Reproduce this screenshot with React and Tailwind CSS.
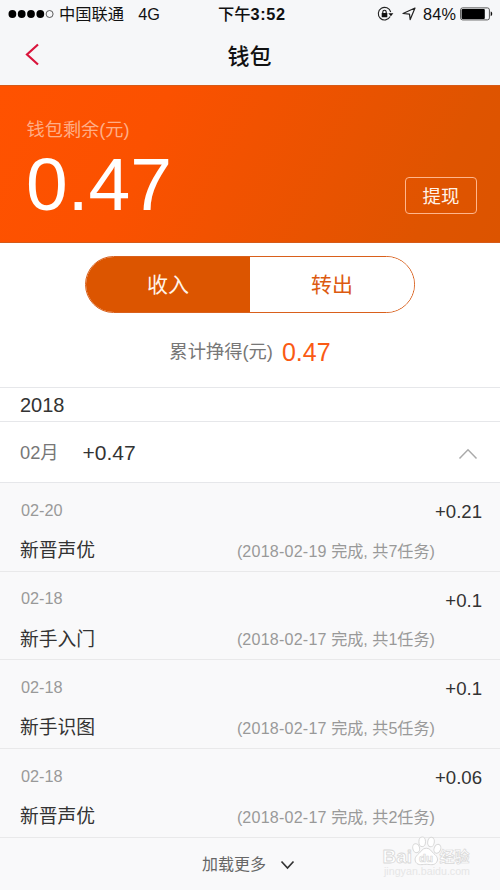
import React, { useState } from 'react';

const records = [
  { date: '02-20', title: '新晋声优', amount: '+0.21', day: '2018-02-19', count: 7 },
  { date: '02-18', title: '新手入门', amount: '+0.1', day: '2018-02-17', count: 1 },
  { date: '02-18', title: '新手识图', amount: '+0.1', day: '2018-02-17', count: 5 },
  { date: '02-18', title: '新晋声优', amount: '+0.06', day: '2018-02-17', count: 2 },
];

function StatusBar() {
  return (
    <div className="relative flex h-7 items-center justify-between pl-[8px] pr-[7px] text-[16.3px] leading-7 text-[#111]">
      <div className="flex items-center">
        <svg width="47" height="10" viewBox="0 0 47 10">
          <circle cx="4.4" cy="5" r="3.9" fill="#000" />
          <circle cx="13.7" cy="5" r="3.9" fill="#000" />
          <circle cx="23" cy="5" r="3.9" fill="#000" />
          <circle cx="32.3" cy="5" r="3.9" fill="#000" />
          <circle cx="41.6" cy="5" r="3.5" fill="none" stroke="#333" strokeWidth="0.8" />
        </svg>
        <span className="ml-[4px]">中国联通</span>
        <span className="ml-[14px]">4G</span>
      </div>
      <div className="absolute left-[218px] top-0 whitespace-nowrap font-medium">
        下午<span className="font-bold tracking-[0.6px]">3:52</span>
      </div>
      <div className="flex items-center">
        <svg width="17" height="16" viewBox="0 0 17 16" className="mr-[8px]">
          <path d="M13.2 10.6A6.3 6.3 0 1 1 13.7 6" fill="none" stroke="#222" strokeWidth="1.1" />
          <path d="M11.4 7.2h5l-2.5 3.1z" fill="#111" />
          <rect x="4.7" y="7" width="5.6" height="4.2" rx="0.5" fill="#111" />
          <path d="M5.8 7V5.9a1.7 1.7 0 0 1 3.4 0V7" fill="none" stroke="#111" strokeWidth="1.1" />
        </svg>
        <svg width="14" height="14" viewBox="0 0 14 14" className="mr-[7px]">
          <path d="M13 1 8.2 12.6 7.5 7.1 1 6.5z" fill="none" stroke="#222" strokeWidth="1.2" strokeLinejoin="round" />
        </svg>
        <span className="w-[34px] tracking-[0.2px]">84%</span>
        <svg width="33" height="14" viewBox="0 0 33 14" className="ml-[3px]">
          <rect x="0.6" y="0.9" width="28.8" height="12" rx="2" fill="none" stroke="#555" strokeWidth="1" />
          <rect x="1.6" y="2" width="23.2" height="9.9" rx="1" fill="#000" />
          <path d="M30.7 4.6c2 .5 2 4.2 0 4.7z" fill="#111" />
        </svg>
      </div>
    </div>
  );
}

function Watermark() {
  return (
    <svg width="96" height="46" viewBox="0 0 96 46" className="absolute left-[380px] top-[-2px]">
      <g fill="#fff" stroke="#d8d8d8" strokeWidth="1" strokeLinejoin="round">
        <text x="2.5" y="27" fontFamily="Liberation Sans, sans-serif" fontWeight="700" fontSize="19" strokeWidth="0.8">Bai</text>
        <ellipse cx="36.2" cy="12.2" rx="3.4" ry="4.5" transform="rotate(-15 36.2 12.2)" />
        <ellipse cx="42.2" cy="5.8" rx="3.3" ry="4.8" />
        <ellipse cx="51" cy="6" rx="3.3" ry="4.8" transform="rotate(8 51 6)" />
        <ellipse cx="57.4" cy="12.8" rx="3.3" ry="4.6" transform="rotate(20 57.4 12.8)" />
        <path d="M46.3 12.2c4.2 0 5 3.4 7.6 5.5 3 2.5 4.9 5.3 2.6 8.7-2.5 3.5-6.4 1.9-10.2 1.9s-7.9 1.6-10.3-1.9c-2.2-3.4-.2-6.2 2.7-8.7 2.6-2.1 3.4-5.5 7.6-5.5z" />
        <text x="39" y="25.5" fontFamily="Liberation Sans, sans-serif" fontWeight="700" fontSize="11.5" strokeWidth="0.7">du</text>
        <text x="59.5" y="26" fontFamily="Noto Sans CJK SC, sans-serif" fontWeight="700" fontSize="15" strokeWidth="0.7">经验</text>
      </g>
      <text x="4" y="38.5" fill="#e6e6e6" fontFamily="Liberation Sans, sans-serif" fontSize="10" textLength="86" lengthAdjust="spacingAndGlyphs">jingyan.baidu.com</text>
    </svg>
  );
}

function RecordRow({ record }) {
  return (
    <li className="flex h-[88.7px] flex-col border-b border-[#e9e9ea] pl-5 pr-[18px]">
      <div className="flex h-[53px] justify-between">
        <span className="ml-[1px] mt-[14.5px] text-[16.3px] leading-6 text-[#999]">{record.date}</span>
        <span className="mt-[15px] text-[18.6px] leading-7 text-[#333]">{record.amount}</span>
      </div>
      <div className="flex items-center leading-7">
        <span className="w-[217px] pt-px text-[18.8px] text-[#333]">{record.title}</span>
        <span className="whitespace-nowrap text-[16.1px] text-[#999]">
          (<span className="tracking-[0.2px]">{record.day}</span> 完成, 共{record.count}任务)
        </span>
      </div>
    </li>
  );
}

function App() {
  const [tab, setTab] = useState('income');
  const active = 'bg-[#dc5500] text-[#fff3e8]';
  const inactive = 'bg-white text-[#dc5a10]';

  return (
    <div className="h-[890px] w-[500px] overflow-hidden bg-[#f9f9fa] font-['Liberation_Sans','Noto_Sans_CJK_SC',sans-serif]">
      <header className="h-[85px] bg-[#f6f7f9]">
        <StatusBar />
        <div className="relative flex h-[57px] items-center justify-center">
          <button className="absolute left-[25px] top-[15px]">
            <svg width="15" height="23" viewBox="0 0 15 23" fill="none" stroke="#d9143c" strokeWidth="2.2">
              <path d="M13 1.5 2 11.5l11 10" />
            </svg>
          </button>
          <h1 className="ml-[-1px] text-[22px] font-medium leading-8 text-[#111]">钱包</h1>
        </div>
      </header>

      <section className="flex h-[158px] justify-between border-y border-[#d65a18] bg-linear-[115deg,#ff5200_0%,#fb5100_30%,#df5400_85%,#dc5400_100%] pl-[26px] pr-[23px]">
        <div>
          <p className="ml-[0.5px] mt-[30px] text-[18.2px] leading-7 text-[#ffae87]">钱包剩余(元)</p>
          <p className="mt-[1px] text-[75px] leading-[78px] text-white">0.47</p>
        </div>
        <button className="mt-[91px] h-[37px] w-[72px] rounded-[4px] border border-[#ffb68c] text-[18.4px] leading-[37px] text-[#fff3e8]">
          提现
        </button>
      </section>

      <section className="h-[144px] bg-white pt-[13px]">
        <div className="mx-auto flex h-[57px] w-[330px] overflow-hidden rounded-full border border-[#d9601c] text-[21px]">
          <button onClick={() => setTab('income')} className={`flex-1 pt-px ${tab === 'income' ? active : inactive}`}>
            收入
          </button>
          <button onClick={() => setTab('outcome')} className={`flex-1 pt-px ${tab === 'outcome' ? active : inactive}`}>
            转出
          </button>
        </div>
        <p className="mt-[23px] flex h-8 items-center justify-center leading-8">
          <span className="text-[18.3px] text-[#777]">累计挣得(元)</span>
          <span className="ml-[9px] text-[25px] text-[#fa5a14]">0.47</span>
        </p>
      </section>

      <div className="h-[35px] border-y border-[#e6e7ea] bg-white pl-[20px] text-[20px] leading-[35px] text-[#333]">2018</div>
      <div className="flex h-[61px] items-center border-b border-[#e6e7ea] bg-white pl-[20px] pr-[22px] pt-[2px]">
        <span className="w-[62.5px] text-[18.3px] text-[#777]">02月</span>
        <span className="text-[21px] text-[#333]">+0.47</span>
        <svg className="ml-auto mt-[2px]" width="20" height="12" viewBox="0 0 20 12" fill="none" stroke="#aaa" strokeWidth="1.5">
          <path d="M1.5 10.5 10 1.8l8.5 8.7" />
        </svg>
      </div>

      <ul>
        {records.map((record, i) => (
          <RecordRow key={i} record={record} />
        ))}
      </ul>

      <div className="relative h-[53px]">
        <button className="flex h-[53px] items-center pl-[202px] pt-px text-[16px] text-[#666]">
          加载更多
          <svg className="ml-[14px]" width="15" height="10" viewBox="0 0 15 10" fill="none" stroke="#333" strokeWidth="1.7">
            <path d="M1.5 1.5 7.5 8l6-6.5" />
          </svg>
        </button>
        <Watermark />
      </div>
    </div>
  );
}

export default App;
